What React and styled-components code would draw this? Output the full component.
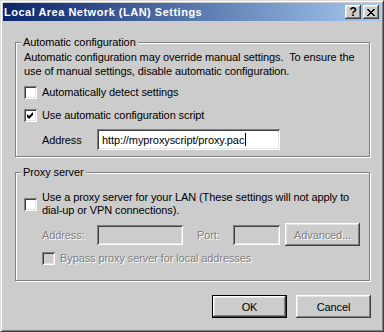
import React from 'react';
import styled, { createGlobalStyle, css } from 'styled-components';

const FACE = '#cccccc';

const GlobalStyle = createGlobalStyle`
  html, body {
    margin: 0;
    padding: 0;
    background: ${FACE};
  }
  body {
    font-family: "Liberation Sans", Arial, sans-serif;
    font-size: 11px;
    letter-spacing: -0.1px;
    color: #000;
  }
`

const raised = css`
  box-shadow: inset -1px -1px #404040, inset 1px 1px #ffffff,
    inset -2px -2px #808080, inset 2px 2px #e4e4e4;
`
const sunken = css`
  box-shadow: inset 1px 1px #808080, inset -1px -1px #ffffff,
    inset 2px 2px #404040, inset -2px -2px #e4e4e4;
`
const disabledText = css`
  color: #808080;
  text-shadow: 1px 1px 0 #ffffff;
`

const Window = styled.div`
  box-sizing: border-box;
  width: 384px;
  height: 332px;
  display: flex;
  flex-direction: column;
  background: ${FACE};
  border: 1px solid;
  border-color: #dcdcdc #404040 #404040 #dcdcdc;
  box-shadow: inset 1px 1px #ffffff, inset -1px -1px #808080;
  padding: 2px;
`

const TitleBar = styled.div`
  flex: none;
  height: 18px;
  display: flex;
  align-items: center;
  padding: 0 2px 0 1px;
  background: linear-gradient(to right, #0a246a, #a6caf0);
`
const Title = styled.div`
  flex: 1;
  color: #fff;
  font-weight: bold;
  letter-spacing: 0.5px;
  white-space: nowrap;
`
const TitleButton = styled.div`
  box-sizing: border-box;
  width: 16px;
  height: 14px;
  display: flex;
  align-items: center;
  justify-content: center;
  background: ${FACE};
  ${raised}
  font-weight: bold;
  font-size: 12px;
  line-height: 1;

  & + & {
    margin-left: 2px;
  }
`

const Content = styled.div`
  flex: 1;
  display: flex;
  flex-direction: column;
  padding: 15px 11px 0 12px;
`

const Group = styled.fieldset`
  margin: 0;
  min-width: 0;
  padding: 0 8px ${props => props.$bottom}px 8px;
  border: 1px solid #808080;
  box-shadow: inset 1px 1px #ffffff, 1px 1px #ffffff;

  & + & {
    margin-top: 9px;
  }
`
const Legend = styled.legend`
  margin-left: -3px;
  padding: 0 2px;
  line-height: 13px;
  background: ${FACE};
`

const Text = styled.div`
  line-height: 14px;
  margin-top: 1px;
  white-space: nowrap;
`

const Row = styled.div`
  display: flex;
  align-items: center;
  margin-top: ${props => props.$top}px;
  padding-left: ${props => props.$indent || 0}px;
  height: ${props => props.$height || 15}px;
`

const Box = styled.span`
  position: relative;
  flex: none;
  box-sizing: border-box;
  width: 13px;
  height: 13px;
  background: ${props => props.$disabled ? FACE : '#ffffff'};
  ${sunken}
`
const BoxLabel = styled.span`
  margin-left: 5px;
  line-height: 13px;
  white-space: nowrap;
  ${props => props.$disabled && disabledText}
`

const FieldLabel = styled.span`
  flex: none;
  width: ${props => props.$width}px;
  margin-left: ${props => props.$left || 0}px;
  white-space: nowrap;
  ${props => props.$disabled && disabledText}
`
const Field = styled.div`
  flex: none;
  box-sizing: border-box;
  width: ${props => props.$width}px;
  height: ${props => props.$height}px;
  display: flex;
  align-items: center;
  padding-left: 5px;
  background: ${props => props.$disabled ? FACE : '#ffffff'};
  ${sunken}
  white-space: nowrap;
`
const Caret = styled.span`
  display: inline-block;
  width: 1px;
  height: 13px;
  margin-left: 1px;
  background: #000;
`

const Button = styled.div`
  flex: none;
  box-sizing: border-box;
  width: 75px;
  height: 23px;
  display: flex;
  align-items: center;
  justify-content: center;
  margin-left: ${props => props.$left || 0}px;
  background: ${FACE};
  border: ${props => props.$default ? '1px solid #000' : 'none'};
  ${raised}
  ${props => props.$disabled && disabledText}
`

const ButtonRow = styled.div`
  display: flex;
  justify-content: flex-end;
  margin-top: 14px;
  margin-right: -1px;
`

const Check = () => (
  <svg width="13" height="13" viewBox="0 0 13 13" style={{ position: 'absolute', left: 0, top: 0 }}>
    <polygon points="3,5 5,7 9,3 9,6 5,10 3,8" fill="#000" />
  </svg>
)

const CloseGlyph = () => (
  <svg width="8" height="7" viewBox="0 0 8 7" shapeRendering="crispEdges">
    <path
      fill="#000"
      d="M0 0h2v1h-2zM6 0h2v1h-2zM1 1h2v1h-2zM5 1h2v1h-2zM2 2h4v1h-4zM3 3h2v1h-2zM2 4h4v1h-4zM1 5h2v1h-2zM5 5h2v1h-2zM0 6h2v1h-2zM6 6h2v1h-2z"
    />
  </svg>
)

function CheckRow ({ top, indent, checked, disabled, height, children }) {
  return (
    <Row $top={top} $indent={indent} $height={height}>
      <Box $disabled={disabled}>{checked && <Check />}</Box>
      <BoxLabel $disabled={disabled}>{children}</BoxLabel>
    </Row>
  )
}

export default function App () {
  return (
    <>
      <GlobalStyle />
      <Window>
        <TitleBar>
          <Title>Local Area Network (LAN) Settings</Title>
          <TitleButton>?</TitleButton>
          <TitleButton><CloseGlyph /></TitleButton>
        </TitleBar>
        <Content>
          <Group $bottom={6}>
            <Legend>Automatic configuration</Legend>
            <Text>
              Automatic configuration may override manual settings.{'\u00a0 '}To ensure the
              <br />
              use of manual settings, disable automatic configuration.
            </Text>
            <CheckRow top={7}>Automatically detect settings</CheckRow>
            <CheckRow top={8} checked>Use automatic configuration script</CheckRow>
            <Row $top={6} $indent={18} $height={21}>
              <FieldLabel $width={55}>Address</FieldLabel>
              <Field $width={183} $height={21}>
                http://myproxyscript/proxy.pac<Caret />
              </Field>
            </Row>
          </Group>
          <Group $bottom={14}>
            <Legend>Proxy server</Legend>
            <CheckRow top={12} height={26}>
              Use a proxy server for your LAN (These settings will not apply to
              <br />
              dial-up or VPN connections).
            </CheckRow>
            <Row $top={6} $indent={18} $height={23}>
              <FieldLabel $width={55} $disabled>Address:</FieldLabel>
              <Field $width={86} $height={20} $disabled />
              <FieldLabel $width={36} $left={14} $disabled>Port:</FieldLabel>
              <Field $width={47} $height={20} $disabled />
              <Button $left={5} $disabled>Advanced...</Button>
            </Row>
            <CheckRow top={5} indent={18} disabled>Bypass proxy server for local addresses</CheckRow>
          </Group>
          <ButtonRow>
            <Button $default>OK</Button>
            <Button $left={9}>Cancel</Button>
          </ButtonRow>
        </Content>
      </Window>
    </>
  );
}
